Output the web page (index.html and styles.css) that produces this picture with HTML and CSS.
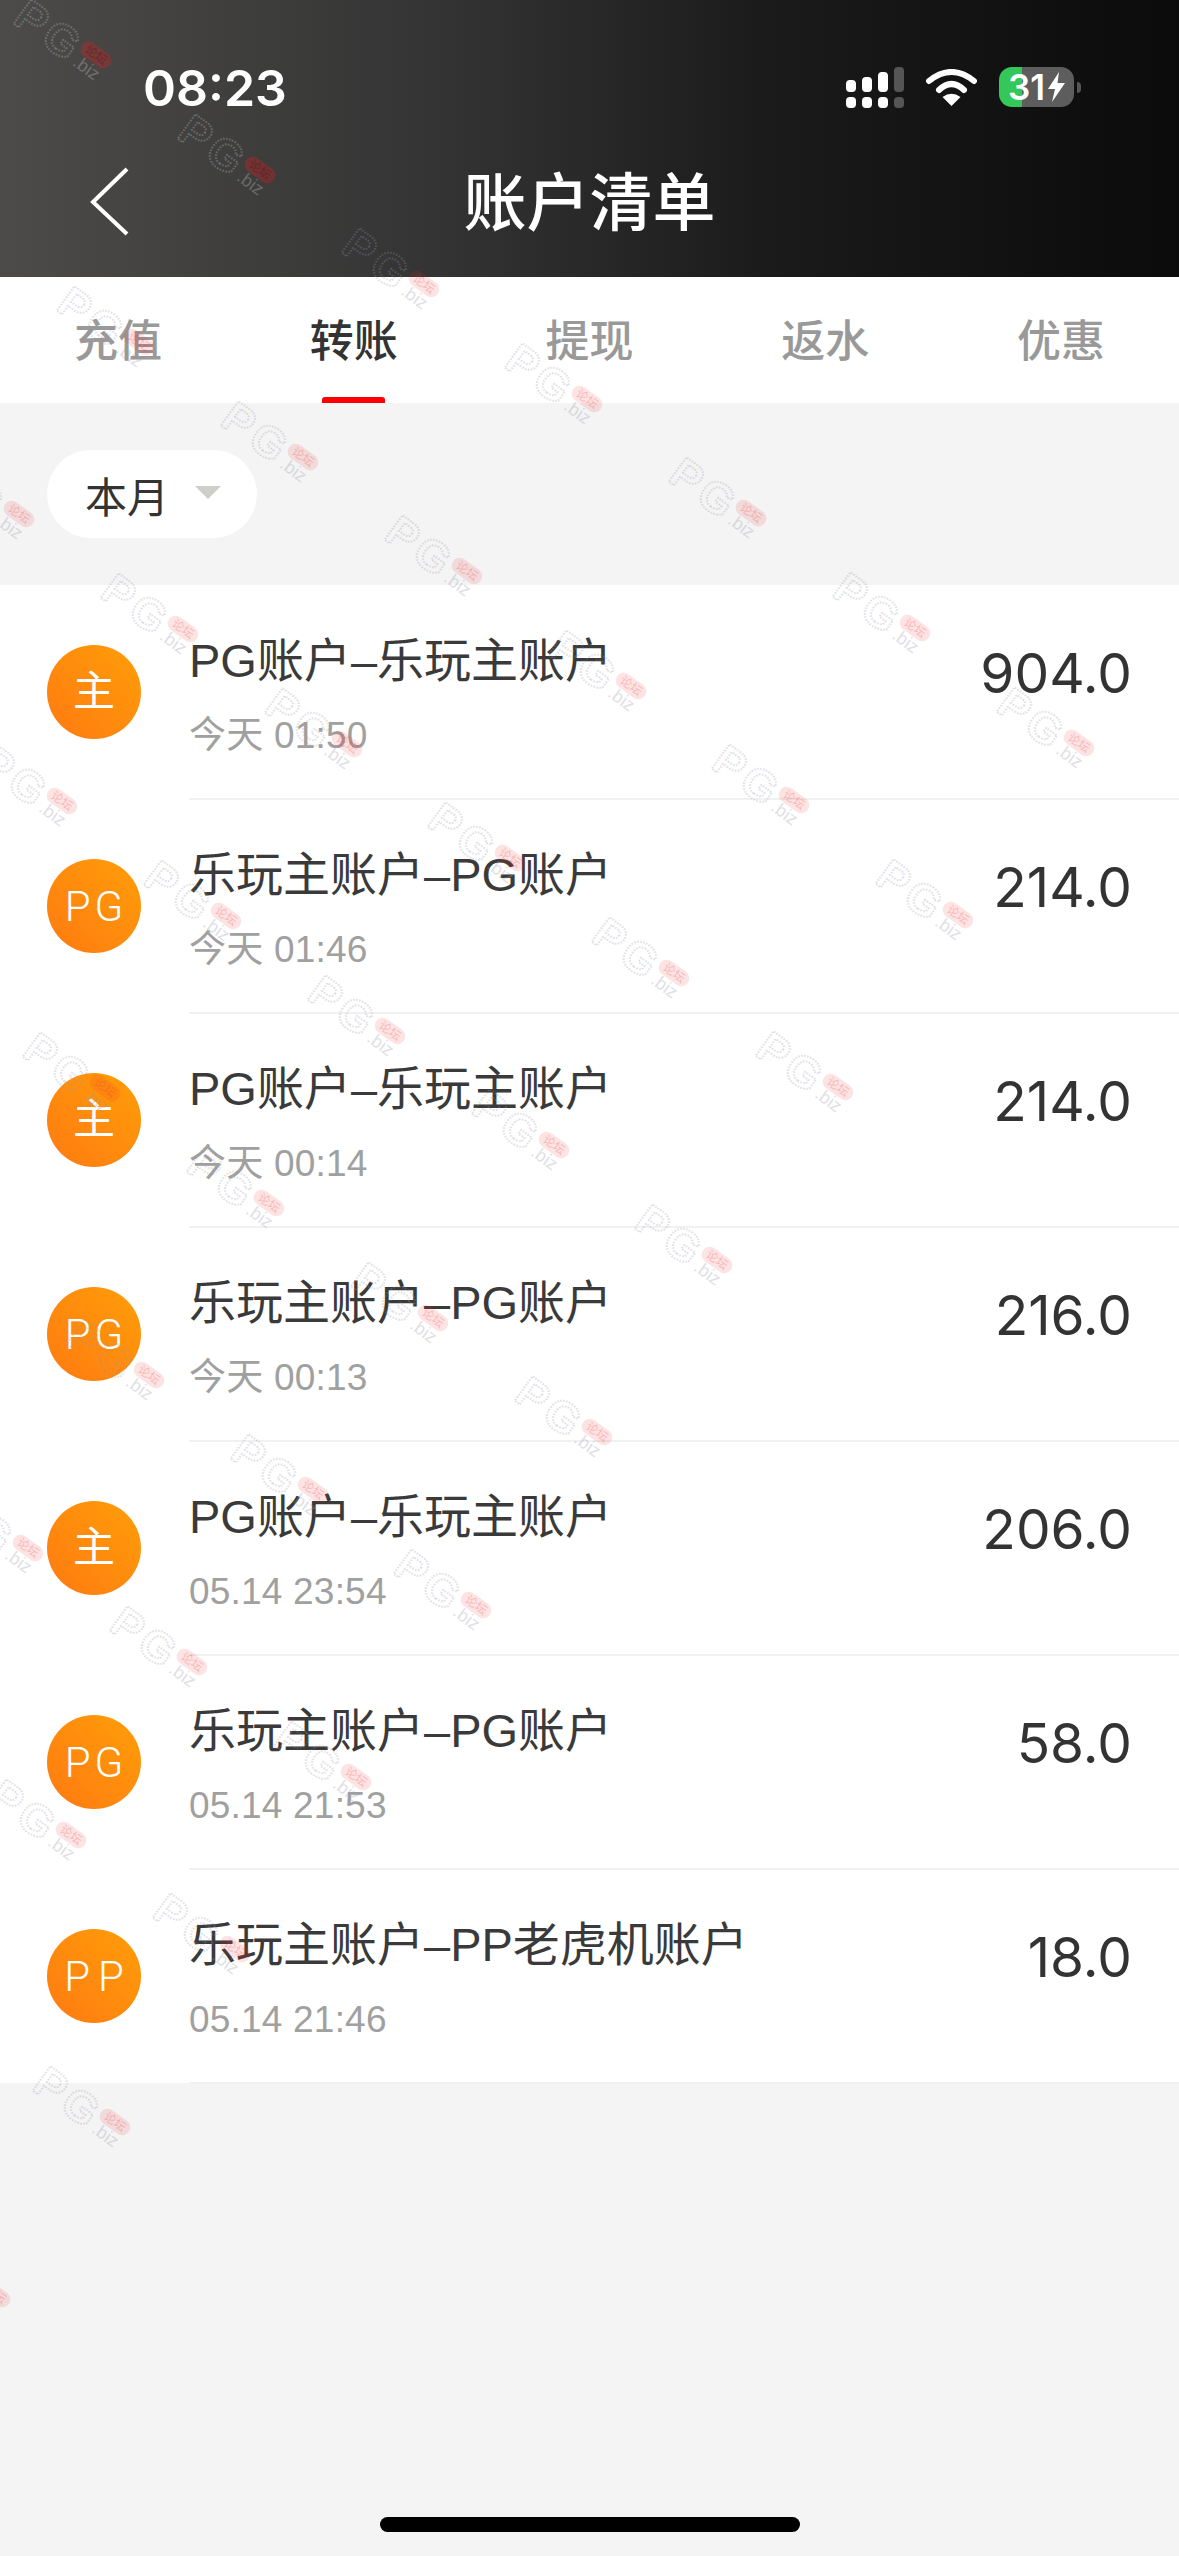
FILE: index.html
```html
<!DOCTYPE html>
<html>
  <head>
    <meta charset="UTF-8" />
    <title>账户清单</title>
    <link rel="stylesheet" href="styles.css">
  </head>
  <body>
    <div class="page">
      <div class="header">
        <div class="status-bar">
          <span class="time">08:23</span>
          <div class="status-icons">
            <div class="signal">
              <div class="signal-col"><i class="bar h1"></i><i class="dot"></i></div>
              <div class="signal-col"><i class="bar h2"></i><i class="dot"></i></div>
              <div class="signal-col"><i class="bar h3"></i><i class="dot"></i></div>
              <div class="signal-col off"><i class="bar h4"></i><i class="dot"></i></div>
            </div>
            <svg class="wifi" width="51" height="37" viewBox="0 0 51 37">
              <path d="M3 12 Q25.5 -6 48 12" fill="none" stroke="#fff" stroke-width="6" stroke-linecap="round" />
              <path d="M13 21 Q25.5 9 38 21" fill="none" stroke="#fff" stroke-width="6" stroke-linecap="round" />
              <path d="M25.5 37 L16.5 28 Q25.5 21.5 34.5 28 Z" fill="#fff" />
            </svg>
            <div class="battery">
              <div class="battery-body">
                <span class="battery-num">31</span>
                <svg class="bolt" width="17" height="30" viewBox="0 0 17 30">
                  <path d="M11 0 L0 17 L7 17 L4 30 L17 11 L9.5 11 Z" fill="#fff" />
                </svg>
              </div>
              <div class="battery-tip"></div>
            </div>
          </div>
        </div>
        <div class="nav-bar">
          <svg class="back" width="40" height="70" viewBox="0 0 40 70">
            <path d="M37 2 L3 35 L37 67" fill="none" stroke="#fff" stroke-width="4" />
          </svg>
          <h1 class="nav-title">账户清单</h1>
        </div>
      </div>

      <div class="tabs">
        <div class="tab">充值</div>
        <div class="tab active">转账</div>
        <div class="tab">提现</div>
        <div class="tab">返水</div>
        <div class="tab">优惠</div>
      </div>

      <div class="filter-wrap">
        <div class="filter">
          <span>本月</span>
          <i class="caret"></i>
        </div>
      </div>

      <div class="list">
        <div class="row">
          <div class="avatar">主</div>
          <div class="row-main">
            <div class="row-title">PG账户–乐玩主账户</div>
            <div class="row-time">今天 01:50</div>
          </div>
          <div class="row-amount">904.0</div>
        </div>
        <div class="row">
          <div class="avatar latin">PG</div>
          <div class="row-main">
            <div class="row-title">乐玩主账户–PG账户</div>
            <div class="row-time">今天 01:46</div>
          </div>
          <div class="row-amount">214.0</div>
        </div>
        <div class="row">
          <div class="avatar">主</div>
          <div class="row-main">
            <div class="row-title">PG账户–乐玩主账户</div>
            <div class="row-time">今天 00:14</div>
          </div>
          <div class="row-amount">214.0</div>
        </div>
        <div class="row">
          <div class="avatar latin">PG</div>
          <div class="row-main">
            <div class="row-title">乐玩主账户–PG账户</div>
            <div class="row-time">今天 00:13</div>
          </div>
          <div class="row-amount">216.0</div>
        </div>
        <div class="row">
          <div class="avatar">主</div>
          <div class="row-main">
            <div class="row-title">PG账户–乐玩主账户</div>
            <div class="row-time">05.14 23:54</div>
          </div>
          <div class="row-amount">206.0</div>
        </div>
        <div class="row">
          <div class="avatar latin">PG</div>
          <div class="row-main">
            <div class="row-title">乐玩主账户–PG账户</div>
            <div class="row-time">05.14 21:53</div>
          </div>
          <div class="row-amount">58.0</div>
        </div>
        <div class="row">
          <div class="avatar latin wide">PP</div>
          <div class="row-main">
            <div class="row-title">乐玩主账户–PP老虎机账户</div>
            <div class="row-time">05.14 21:46</div>
          </div>
          <div class="row-amount">18.0</div>
        </div>
      </div>

      <div class="home-indicator"></div>

      <!-- forum watermark stamped over the whole screenshot -->
      <svg class="watermark" width="1179" height="2556" viewBox="0 0 1179 2556">
        <defs>
          <g id="wm-mark" transform="rotate(36)">
            <text class="wm-pg" x="-88" y="23">PG</text>
            <text class="wm-biz" x="-14" y="22">.biz</text>
          </g>
          <g id="wm-pill" transform="rotate(36)">
            <rect class="wm-pill-bg" x="-17" y="-8" width="34" height="16" rx="8" />
            <text class="wm-pill-text" x="0" y="4">论坛</text>
          </g>
        </defs>
        <g class="wm-on-dark">
          <use href="#wm-mark" x="96" y="55" /><use href="#wm-pill" x="96" y="55" />
          <use href="#wm-mark" x="260" y="170" /><use href="#wm-pill" x="260" y="170" />
        </g>
        <g class="wm-on-light">
          <use href="#wm-mark" x="424" y="284" /><use href="#wm-pill" x="424" y="284" />
          <use href="#wm-mark" x="587" y="399" /><use href="#wm-pill" x="587" y="399" />
          <use href="#wm-mark" x="751" y="513" /><use href="#wm-pill" x="751" y="513" />
          <use href="#wm-mark" x="915" y="628" /><use href="#wm-pill" x="915" y="628" />
          <use href="#wm-mark" x="1079" y="743" /><use href="#wm-pill" x="1079" y="743" />
          <use href="#wm-mark" x="139" y="342" /><use href="#wm-pill" x="139" y="342" />
          <use href="#wm-mark" x="303" y="457" /><use href="#wm-pill" x="303" y="457" />
          <use href="#wm-mark" x="467" y="571" /><use href="#wm-pill" x="467" y="571" />
          <use href="#wm-mark" x="631" y="686" /><use href="#wm-pill" x="631" y="686" />
          <use href="#wm-mark" x="794" y="800" /><use href="#wm-pill" x="794" y="800" />
          <use href="#wm-mark" x="958" y="915" /><use href="#wm-pill" x="958" y="915" />
          <use href="#wm-mark" x="19" y="514" /><use href="#wm-pill" x="19" y="514" />
          <use href="#wm-mark" x="183" y="629" /><use href="#wm-pill" x="183" y="629" />
          <use href="#wm-mark" x="347" y="744" /><use href="#wm-pill" x="347" y="744" />
          <use href="#wm-mark" x="510" y="858" /><use href="#wm-pill" x="510" y="858" />
          <use href="#wm-mark" x="674" y="973" /><use href="#wm-pill" x="674" y="973" />
          <use href="#wm-mark" x="838" y="1087" /><use href="#wm-pill" x="838" y="1087" />
          <use href="#wm-mark" x="62" y="801" /><use href="#wm-pill" x="62" y="801" />
          <use href="#wm-mark" x="226" y="916" /><use href="#wm-pill" x="226" y="916" />
          <use href="#wm-mark" x="390" y="1031" /><use href="#wm-pill" x="390" y="1031" />
          <use href="#wm-mark" x="554" y="1145" /><use href="#wm-pill" x="554" y="1145" />
          <use href="#wm-mark" x="717" y="1260" /><use href="#wm-pill" x="717" y="1260" />
          <use href="#wm-mark" x="105" y="1088" /><use href="#wm-pill" x="105" y="1088" />
          <use href="#wm-mark" x="269" y="1203" /><use href="#wm-pill" x="269" y="1203" />
          <use href="#wm-mark" x="433" y="1318" /><use href="#wm-pill" x="433" y="1318" />
          <use href="#wm-mark" x="597" y="1432" /><use href="#wm-pill" x="597" y="1432" />
          <use href="#wm-mark" x="149" y="1375" /><use href="#wm-pill" x="149" y="1375" />
          <use href="#wm-mark" x="313" y="1490" /><use href="#wm-pill" x="313" y="1490" />
          <use href="#wm-mark" x="476" y="1605" /><use href="#wm-pill" x="476" y="1605" />
          <use href="#wm-mark" x="28" y="1548" /><use href="#wm-pill" x="28" y="1548" />
          <use href="#wm-mark" x="192" y="1662" /><use href="#wm-pill" x="192" y="1662" />
          <use href="#wm-mark" x="356" y="1777" /><use href="#wm-pill" x="356" y="1777" />
          <use href="#wm-mark" x="71" y="1835" /><use href="#wm-pill" x="71" y="1835" />
          <use href="#wm-mark" x="235" y="1949" /><use href="#wm-pill" x="235" y="1949" />
          <use href="#wm-mark" x="115" y="2122" /><use href="#wm-pill" x="115" y="2122" />
          <use href="#wm-mark" x="-5" y="2294" /><use href="#wm-pill" x="-5" y="2294" />
        </g>
      </svg>
    </div>
  </body>
</html>
```

FILE: styles.css
```css
* { box-sizing: border-box; }
body {
    margin: 0;
    font-family: "Liberation Sans", "Noto Sans CJK SC", sans-serif;
    color: #333;
}
.page {
    position: relative; /* anchor for the watermark */
    width: 1179px;
    height: 2556px;
    overflow: hidden;
    background-color: #f4f4f4;
    display: flex;
    flex-direction: column;
}

/* Header */
.header {
    height: 277px;
    flex: none;
    background: linear-gradient(90deg, #4c4b49 0%, #333 38%, #1a1a1a 66%, #0b0b0b 100%);
    color: #fff;
}
.status-bar {
    height: 140px;
    padding: 60px 0 0 143px;
    display: flex;
    justify-content: space-between;
    align-items: flex-start;
}
.time {
    font-family: Inter, sans-serif;
    font-size: 50px;
    font-weight: 600;
    line-height: 56px;
}
.status-icons {
    display: flex;
    align-items: flex-start;
    padding: 7px 98px 0 0;
}
.signal { display: flex; gap: 6px; margin-right: 22px; }
.signal-col { display: flex; flex-direction: column; justify-content: flex-end; gap: 5px; height: 41px; }
.signal-col i { display: block; width: 10px; background-color: #fff; border-radius: 4px; }
.signal-col.off i { background-color: #555; }
.dot { height: 11px; }
.h1 { height: 12px; }
.h2 { height: 15px; }
.h3 { height: 20px; }
.h4 { height: 25px; }
.wifi { margin: 2px 22px 0 0; }
.battery { display: flex; align-items: center; height: 40px; }
.battery-body {
    width: 75px;
    height: 40px;
    border-radius: 13px;
    background: linear-gradient(90deg, #34c75a 23px, #5d5d5d 23px);
    display: flex;
    align-items: center;
    padding-left: 9px;
}
.battery-num {
    font-family: Inter, sans-serif;
    font-size: 35px;
    font-weight: 600;
    line-height: 40px;
}
.bolt { margin-left: 3px; }
.battery-tip {
    width: 4px;
    height: 11px;
    margin-left: 3px;
    background-color: #555;
    border-radius: 0 6px 6px 0;
}
.nav-bar {
    position: relative;
    height: 137px;
    display: flex;
    align-items: flex-start;
    justify-content: center;
}
.back {
    position: absolute;
    left: 90px;
    top: 27px;
}
.nav-title {
    margin: 0;
    font-size: 63px;
    font-weight: 500;
    line-height: 90px;
    padding-top: 18px;
}

/* Tabs */
.tabs {
    height: 126px;
    flex: none;
    background-color: #fff;
    display: flex;
}
.tab {
    position: relative;
    flex: 1;
    text-align: center;
    font-size: 44px;
    font-weight: 500;
    line-height: 130px;
    color: #999;
}
.tab.active { color: #333; }
.tab.active::after {
    content: "";
    position: absolute;
    left: 86px;
    bottom: 0;
    width: 63px;
    height: 6px;
    border-radius: 3px 3px 0 0;
    background-color: #f00;
}

/* Month filter */
.filter-wrap {
    height: 182px;
    flex: none;
    padding: 47px 0 0 47px;
}
.filter {
    width: 210px;
    height: 88px;
    border-radius: 44px;
    background-color: #fff;
    display: flex;
    align-items: center;
    padding-left: 38px;
    font-size: 42px;
}
.caret {
    margin: 0 0 4px 26px;
    border-left: 13px solid transparent;
    border-right: 13px solid transparent;
    border-top: 13px solid #cfcfc9;
}

/* Transfer rows */
.list { background-color: #fff; flex: none; }
.row {
    position: relative;
    height: 214px;
    display: flex;
    align-items: flex-start;
    padding: 0 47px 0 47px;
}
.row::after {
    content: "";
    position: absolute;
    left: 189px;
    right: 0;
    bottom: -1px;
    height: 2px;
    background-color: #f1f1f1;
}
.avatar {
    flex: none;
    width: 94px;
    height: 94px;
    margin-top: 60px;
    border-radius: 50%;
    background: linear-gradient(45deg, #ff7a12, #ff9e08);
    color: #fff;
    font-size: 42px;
    line-height: 94px;
    text-align: center;
}
.avatar.latin {
    font-family: Roboto, sans-serif;
    font-weight: 300;
    font-size: 42px;
    letter-spacing: 4px;
    line-height: 96px;
    padding-left: 4px;
}
.avatar.wide { letter-spacing: 8px; padding-left: 8px; }
.row-main { flex: 1; padding: 47px 0 0 48px; }
.row-title { font-size: 47px; line-height: 58px; color: #3a3a3a; }
.row-time {
    margin-top: 21px;
    font-size: 37px;
    line-height: 50px;
    letter-spacing: 0.2px;
    color: #a0a0a0;
}
.row-amount {
    font-family: Inter, sans-serif;
    font-size: 55px;
    line-height: 64px;
    margin-top: 56px;
    color: #333;
}

.home-indicator {
    width: 420px;
    height: 15px;
    margin: auto auto 24px;
    border-radius: 8px;
    background-color: #000;
}

/* Watermark */
.watermark {
    position: absolute;
    left: 0;
    top: 0;
    pointer-events: none;
}
.wm-on-dark { --wm-stroke: #bbb; --wm-pill: #e02020; --wm-pill-ink: #300; --wm-pill-alpha: 0.32; --wm-alpha: 0.35; }
.wm-on-light { --wm-stroke: #99a; --wm-pill: #f03030; --wm-pill-ink: #e33; --wm-pill-alpha: 0.13; --wm-alpha: 0.3; }
.wm-pg {
    font-family: "Liberation Sans", sans-serif;
    font-size: 44px;
    font-weight: 700;
    letter-spacing: 5px;
    fill: none;
    stroke: var(--wm-stroke);
    stroke-width: 2;
    stroke-dasharray: 1.5 1.5;
    opacity: var(--wm-alpha);
}
.wm-biz {
    font-family: "Liberation Sans", sans-serif;
    font-size: 18px;
    fill: var(--wm-stroke);
    opacity: var(--wm-alpha);
}
.wm-pill-bg { fill: var(--wm-pill); opacity: var(--wm-pill-alpha); }
.wm-pill-text {
    font-family: "Noto Sans CJK SC", sans-serif;
    font-size: 12px;
    text-anchor: middle;
    fill: var(--wm-pill-ink);
    opacity: 0.25;
}
```
